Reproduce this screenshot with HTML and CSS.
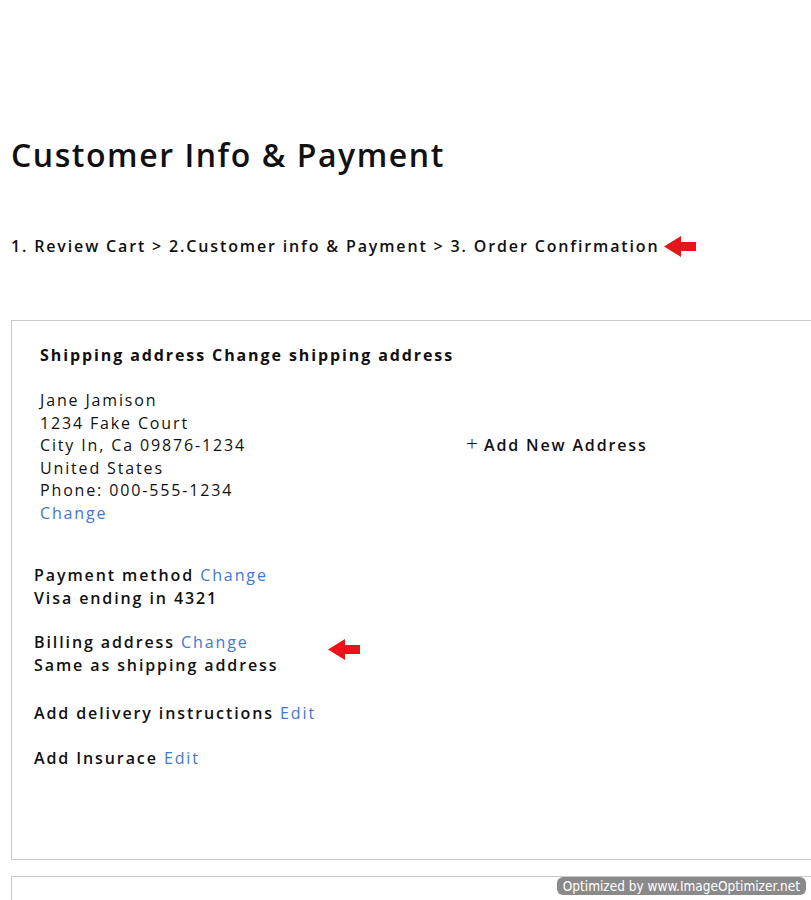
FILE: index.html
```html
<!DOCTYPE html>
<html lang="en">
<head>
<meta charset="utf-8">
<title>Customer Info &amp; Payment</title>
<link rel="stylesheet" href="styles.css">
</head>
<body>
<div class="page">
  <h1 class="title">Customer Info &amp; Payment</h1>
  <div class="steps">
    <span>1. Review Cart &gt; 2.Customer info &amp; Payment &gt; 3. Order Confirmation</span>
    <svg class="arrow" width="32" height="21" viewBox="0 0 32 21"><path d="M0 10.5 L17 0 L17 6 L32 6 L32 15 L17 15 L17 21 Z" fill="#e8141c"/></svg>
  </div>
  <section class="card">
    <h2 class="card-heading">Shipping address Change shipping address</h2>
    <div class="address-row">
      <div class="address">
        <div>Jane Jamison</div>
        <div>1234 Fake Court</div>
        <div>City In, Ca 09876-1234</div>
        <div>United States</div>
        <div>Phone: 000-555-1234</div>
        <a class="link" href="#">Change</a>
      </div>
      <div class="add-new"><span class="plus">+</span> Add New Address</div>
    </div>
    <div class="info info-first">
      <div>Payment method <a class="link" href="#">Change</a></div>
      <div>Visa ending in 4321</div>
    </div>
    <div class="info info-billing">
      <div>Billing address <a class="link" href="#">Change</a></div>
      <div>Same as shipping address</div>
      <svg class="arrow arrow-billing" width="32" height="21" viewBox="0 0 32 21"><path d="M0 10.5 L17 0 L17 6 L32 6 L32 15 L17 15 L17 21 Z" fill="#e8141c"/></svg>
    </div>
    <div class="info info-delivery">
      <div>Add delivery instructions <a class="link" href="#">Edit</a></div>
    </div>
    <div class="info info-insurance">
      <div>Add Insurace <a class="link" href="#">Edit</a></div>
    </div>
  </section>
  <section class="card card-next"></section>
</div>
<div class="watermark">Optimized by www.ImageOptimizer.net</div>
</body>
</html>
```

FILE: styles.css
```css
html, body {
  margin: 0;
  padding: 0;
  background: #ffffff;
  overflow: hidden;
}

body {
  font-family: "Open Sans", "Liberation Sans", sans-serif;
  color: #111111;
  width: 811px;
  height: 900px;
  position: relative;
}

.page {
  padding-left: 11px;
  overflow: hidden;
}

.title {
  margin: 135px 0 0 0;
  font-size: 32px;
  line-height: 40px;
  font-weight: 600;
  letter-spacing: 1.55px;
}

.steps {
  margin-top: 59px;
  display: flex;
  align-items: center;
  gap: 5px;
  font-size: 16px;
  line-height: 24px;
  font-weight: 600;
  letter-spacing: 1.85px;
}

.arrow {
  display: block;
}

.card {
  margin-top: 62px;
  border: 1px solid #c9c9c9;
  border-right: none;
  padding: 22px 0 90px 22px;
  font-size: 16px;
  line-height: 22.5px;
  letter-spacing: 1.85px;
}

.card-heading {
  margin: 0 0 0 6px;
  font-size: 16px;
  line-height: 24px;
  font-weight: 700;
  letter-spacing: 1.9px;
}

.address-row {
  display: grid;
  grid-template-columns: 426px auto;
  margin: 22px 0 0 6px;
}

.address {
  font-weight: 400;
}

.address .link {
  display: block;
}

.add-new {
  margin-top: 45px;
  font-weight: 600;
}

.plus {
  font-weight: 300;
  font-size: 21px;
  line-height: 0;
  letter-spacing: 0;
}

.link {
  color: #4178d0;
  text-decoration: none;
  font-weight: 400;
}

.info {
  font-weight: 600;
  letter-spacing: 1.9px;
}

.info-first {
  margin-top: 40px;
}

.info-billing {
  margin-top: 22px;
  position: relative;
}

.arrow-billing {
  position: absolute;
  left: 294px;
  top: 8px;
}

.info-delivery {
  margin-top: 26px;
}

.info-insurance {
  margin-top: 22px;
}

.card-next {
  margin-top: 16px;
  border-bottom: none;
  height: 40px;
  padding: 0;
}

.watermark {
  position: absolute;
  right: 5px;
  bottom: 5px;
  background: #8a8a8a;
  color: #ffffff;
  font-family: "DejaVu Sans Condensed", "DejaVu Sans", sans-serif;
  font-size: 13.5px;
  line-height: 18px;
  padding: 0 6px;
  border-radius: 6px;
}
```
